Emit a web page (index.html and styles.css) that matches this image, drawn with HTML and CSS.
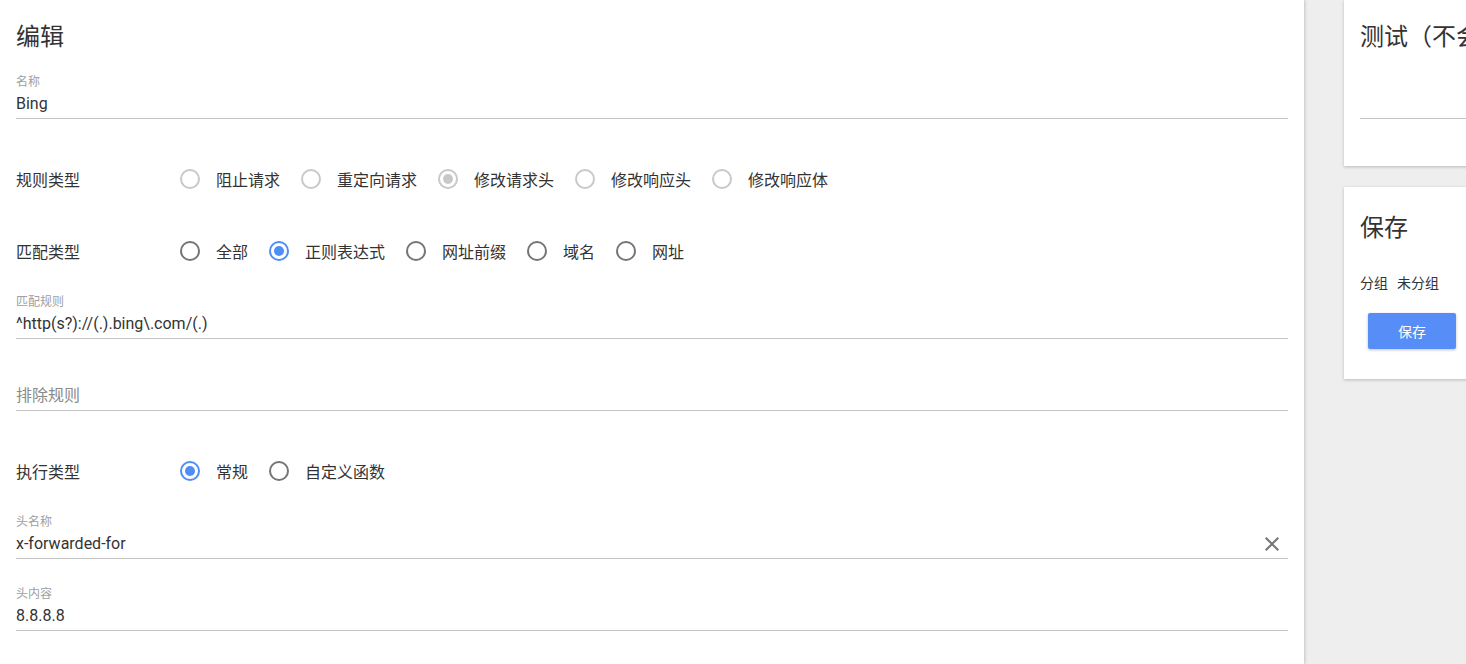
FILE: index.html
```html
<!DOCTYPE html>
<html lang="zh-CN">
<head>
<meta charset="utf-8">
<title>编辑</title>
<link rel="stylesheet" href="styles.css">
</head>
<body>
<div class="page">
  <main class="editor">
    <h1 class="title">编辑</h1>

    <div class="field f-name">
      <div class="field-label">名称</div>
      <div class="field-value">Bing</div>
    </div>

    <div class="radio-row r-rule">
      <div class="row-label">规则类型</div>
      <div class="radios">
        <span class="radio disabled"><span class="circle"></span><span class="rtext">阻止请求</span></span>
        <span class="radio disabled"><span class="circle"></span><span class="rtext">重定向请求</span></span>
        <span class="radio disabled checked"><span class="circle"></span><span class="rtext">修改请求头</span></span>
        <span class="radio disabled"><span class="circle"></span><span class="rtext">修改响应头</span></span>
        <span class="radio disabled"><span class="circle"></span><span class="rtext">修改响应体</span></span>
      </div>
    </div>

    <div class="radio-row r-match">
      <div class="row-label">匹配类型</div>
      <div class="radios">
        <span class="radio"><span class="circle"></span><span class="rtext">全部</span></span>
        <span class="radio checked"><span class="circle"></span><span class="rtext">正则表达式</span></span>
        <span class="radio"><span class="circle"></span><span class="rtext">网址前缀</span></span>
        <span class="radio"><span class="circle"></span><span class="rtext">域名</span></span>
        <span class="radio"><span class="circle"></span><span class="rtext">网址</span></span>
      </div>
    </div>

    <div class="field f-pattern">
      <div class="field-label">匹配规则</div>
      <div class="field-value">^http(s?)://(.).bing\.com/(.)</div>
    </div>

    <div class="field f-exclude">
      <div class="field-label"></div>
      <div class="field-value placeholder">排除规则</div>
    </div>

    <div class="radio-row r-exec">
      <div class="row-label">执行类型</div>
      <div class="radios">
        <span class="radio checked"><span class="circle"></span><span class="rtext">常规</span></span>
        <span class="radio"><span class="circle"></span><span class="rtext">自定义函数</span></span>
      </div>
    </div>

    <div class="field f-hname">
      <div class="field-label">头名称</div>
      <div class="field-value with-clear">
        <span>x-forwarded-for</span>
        <svg class="clear" viewBox="0 0 24 24" width="24" height="24"><path d="M19 6.41L17.59 5 12 10.59 6.41 5 5 6.41 10.59 12 5 17.59 6.41 19 12 13.41 17.59 19 19 17.59 13.41 12z" fill="#757575"/></svg>
      </div>
    </div>

    <div class="field f-hvalue">
      <div class="field-label">头内容</div>
      <div class="field-value">8.8.8.8</div>
    </div>
  </main>

  <aside class="side">
    <section class="card card-test">
      <h2 class="card-title">测试（不会</h2>
      <div class="test-input"></div>
    </section>
    <section class="card card-save">
      <h2 class="card-title">保存</h2>
      <div class="group-line"><span>分组</span><span>未分组</span></div>
      <button class="btn-save">保存</button>
    </section>
  </aside>
</div>
</body>
</html>
```

FILE: styles.css
```css
html, body {
  margin: 0;
  padding: 0;
  height: 100%;
  overflow: hidden;
}
body {
  font-family: Roboto, "Noto Sans CJK SC", "Noto Sans", sans-serif;
  color: #333;
  background: #eeeeee;
}
.page {
  display: flex;
  height: 664px;
}
.editor {
  width: 1272px;
  flex: 0 0 1272px;
  padding: 0 16px;
  background: #fff;
  box-shadow: 1px 0 3px rgba(0,0,0,0.18);
  position: relative;
  z-index: 1;
}
.title {
  margin: 0;
  padding-top: 21px;
  font-size: 24px;
  line-height: 32px;
  font-weight: 400;
  color: #333;
}
.field {
  border-bottom: 1px solid #c4c4c4;
  padding-bottom: 2px;
}
.field-label {
  height: 16px;
  font-size: 12px;
  line-height: 16px;
  color: #a0a0a0;
  margin-bottom: 2px;
}
.field-value {
  height: 24px;
  font-size: 16px;
  line-height: 24px;
  color: #333;
}
.field-value.placeholder {
  color: #8a8a8a;
}
.with-clear {
  display: flex;
  justify-content: space-between;
  align-items: center;
}
.clear {
  width: 24px;
  height: 24px;
  margin-right: 4px;
}
.f-name { margin-top: 21px; }
.r-rule { margin-top: 40px; }
.r-match { margin-top: 32px; }
.f-pattern { margin-top: 23px; }
.f-exclude { margin-top: 27px; }
.r-exec { margin-top: 40px; }
.f-hname { margin-top: 23px; }
.f-hvalue { margin-top: 27px; }

.radio-row {
  display: flex;
  align-items: center;
  height: 40px;
}
.row-label {
  width: 164px;
  font-size: 16px;
  color: #333;
}
.radios {
  display: flex;
  align-items: center;
  gap: 21px;
}
.radio {
  display: flex;
  align-items: center;
  font-size: 16px;
  color: #333;
}
.circle {
  box-sizing: border-box;
  width: 20px;
  height: 20px;
  border: 2px solid #757575;
  border-radius: 50%;
  margin-right: 16px;
  position: relative;
}
.radio.checked .circle {
  border-color: #4f8ef7;
}
.radio.checked .circle::after {
  content: "";
  position: absolute;
  left: 3px;
  top: 3px;
  width: 10px;
  height: 10px;
  border-radius: 50%;
  background: #4f8ef7;
}
.radio.disabled .circle {
  border-color: #c8c8c8;
}
.radio.disabled.checked .circle::after {
  background: #c8c8c8;
}

.side {
  flex: 1;
  padding-left: 40px;
  min-width: 0;
  overflow: hidden;
}
.card {
  background: #fff;
  box-shadow: 0 1px 3px rgba(0,0,0,0.22);
  width: 300px;
  padding: 0 16px;
}
.card-title {
  margin: 0;
  font-size: 24px;
  line-height: 32px;
  font-weight: 400;
  color: #333;
  white-space: nowrap;
}
.card-test {
  height: 166px;
  padding-top: 21px;
  box-sizing: border-box;
}
.test-input {
  margin-top: 65px;
  border-bottom: 1px solid #c4c4c4;
}
.card-save {
  margin-top: 21px;
  height: 192px;
  box-sizing: border-box;
  padding-top: 25px;
}
.group-line {
  margin-top: 29px;
  font-size: 14px;
  line-height: 20px;
  color: #333;
  display: flex;
  gap: 9px;
}
.btn-save {
  display: block;
  margin-top: 20px;
  margin-left: 8px;
  width: 88px;
  height: 36px;
  border: none;
  border-radius: 2px;
  background: #568df6;
  color: #fff;
  font-family: Roboto, "Noto Sans CJK SC", sans-serif;
  font-size: 14px;
  box-shadow: 0 1px 3px rgba(0,0,0,0.25);
}
```
